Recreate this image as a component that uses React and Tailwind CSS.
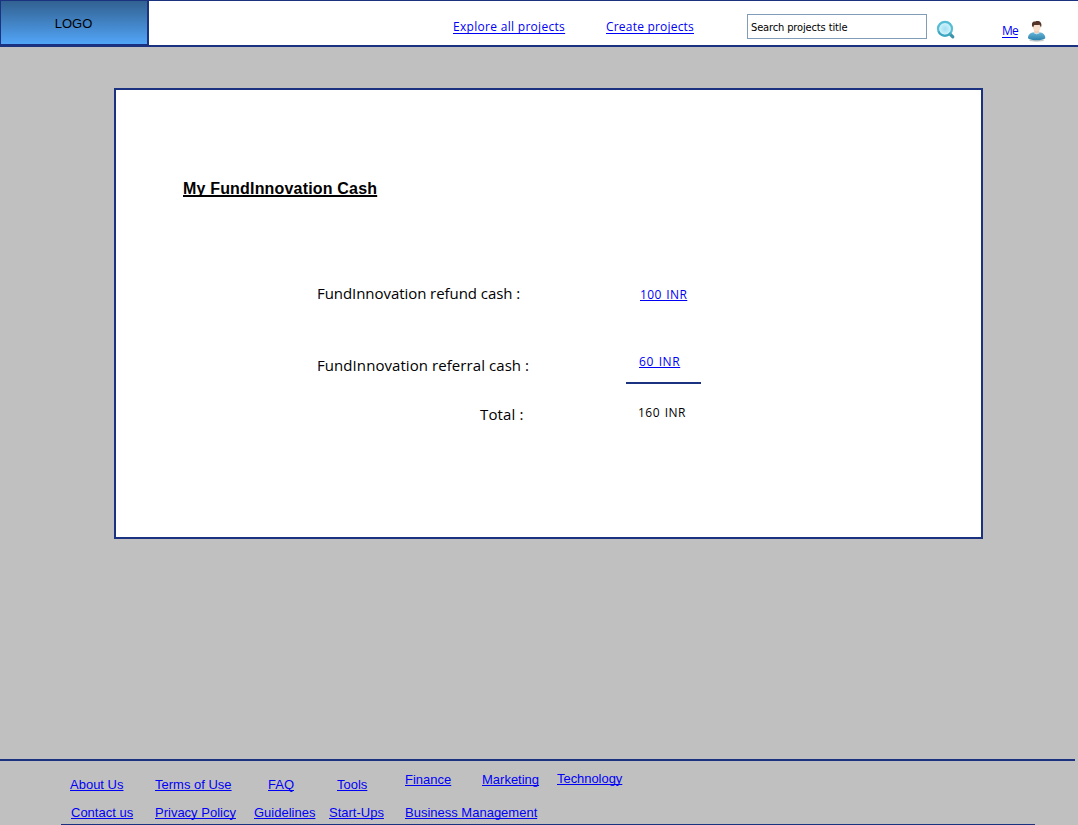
const LINK =
  "block shrink-0 whitespace-nowrap text-[#0000f5] underline decoration-1 [text-decoration-skip-ink:none]";
const HAND = "font-['Comic_Sans_MS','Open_Sans',sans-serif]";

function SearchIcon() {
  return (
    <svg viewBox="0 0 20 20" className="ml-[9px] mt-[19px] size-5 shrink-0">
      <defs>
        <radialGradient id="lens">
          <stop offset="0" stopColor="#9fe0f4" />
          <stop offset="0.5" stopColor="#bdeaf7" />
          <stop offset="1" stopColor="#e0f6fc" />
        </radialGradient>
      </defs>
      <path d="M14.300 14.300l2.500 2.500" stroke="#3f93a8" strokeWidth="3.2" strokeLinecap="round" />
      <circle cx="9" cy="8.800" r="7" fill="url(#lens)" stroke="#55bdd6" strokeWidth="2.200" />
      <path d="M2.500 11.400A7 7 0 0 0 14.600 12.800" fill="none" stroke="#3ea5be" strokeWidth="1.800" />
    </svg>
  );
}

function UserIcon() {
  return (
    <svg viewBox="0 0 20 22" className="mt-[19px] h-[22px] w-5 shrink-0">
      <defs>
        <linearGradient id="shirt" x1="0" y1="0" x2="0" y2="1">
          <stop offset="0" stopColor="#68b5d7" />
          <stop offset="1" stopColor="#2c82ac" />
        </linearGradient>
      </defs>
      <ellipse cx="9.700" cy="20.500" rx="7.500" ry="1.200" fill="#c5cacc" />
      <path d="M1 18.300c0-4 2.500-5.500 6-6h5.200c3.600.5 6.100 2 6.100 6-1.800 1.600-5 2-8.600 2s-7-.4-8.700-2z" fill="url(#shirt)" />
      <path d="M7.200 12.600V9.500h5v3.100l-2.500 1.300z" fill="#f2cdb5" />
      <path d="M6.800 12.800l2.900 1 2.900-1" fill="none" stroke="#d6eaf2" strokeWidth="0.900" />
      <ellipse cx="9.700" cy="7" rx="4" ry="4.300" fill="#f8dfcd" />
      <path d="M5.300 6.600C4.200 3 5.800 1.200 8.300 1.500c3.500-1.400 7 .6 6 5.100l-.7.600c0-1.400-.5-2-1.300-2.500-1.500.6-3.300.2-4.700.2-.9.400-1 1.200-1.200 2.300z" fill="#553328" />
    </svg>
  );
}

export default function App() {
  return (
    <div className="flex h-[825px] w-[1078px] flex-col overflow-hidden bg-[#c0c0c0] text-black">
      <header className="flex h-[47px] shrink-0 items-start border-t border-b-2 border-[#1b3281] bg-white">
        <div className="-mt-px flex h-[46px] w-[149px] shrink-0 justify-center border-2 border-t border-l border-[#1b3281] bg-linear-to-b from-[#316191] to-[#52a5f8] pr-px pt-[15px] font-['Liberation_Sans',sans-serif] text-[13px] leading-4">
          LOGO
        </div>
        <a className={`${LINK} ${HAND} ml-[304px] mt-[18px] w-[112px] text-[12px] leading-4 tracking-[0.3px] underline-offset-2`}>Explore all projects</a>
        <a className={`${LINK} ${HAND} ml-[41px] mt-[18px] w-[88px] text-[12px] leading-4 tracking-[0.2px] underline-offset-2`}>Create projects</a>
        <div className="ml-[53px] mt-[13px] h-[25px] w-[180px] shrink-0 whitespace-nowrap border border-[#7f9db9] bg-white pl-[3px] pt-[5px] font-['DejaVu_Sans_Condensed','DejaVu_Sans',sans-serif] text-[11px] leading-4 tracking-[-0.13px] font-stretch-condensed">
          Search projects title
        </div>
        <SearchIcon />
        <a className={`${LINK} ${HAND} ml-[46px] mr-[9px] mt-[22px] text-[12px] leading-4 tracking-[-0.8px] underline-offset-2`}>Me</a>
        <UserIcon />
      </header>

      <main className="ml-[114px] mt-[41px] flex h-[451px] w-[869px] shrink-0 flex-col border-2 border-[#1b3281] bg-white">
        <h1 className="ml-[67px] mt-[89px] self-start whitespace-nowrap font-['Liberation_Sans',sans-serif] text-[16px] leading-5 font-bold tracking-[0.18px] underline decoration-2 [text-decoration-skip-ink:none]">
          My FundInnovation Cash
        </h1>
        <div className={`${HAND} ml-[201px] mt-[84px] flex h-[72px] shrink-0 items-start whitespace-nowrap`}>
          <span className="w-[323px] text-[15px] leading-5 tracking-[-0.06px]">FundInnovation refund cash :</span>
          <a className={`${LINK} mt-[4px] text-[12px] leading-4 tracking-[0.4px] [word-spacing:1px]`}>100 INR</a>
        </div>
        <div className={`${HAND} ml-[201px] flex h-[49px] shrink-0 items-start whitespace-nowrap`}>
          <span className="w-[309px] text-[15px] leading-5 tracking-[0.07px]">FundInnovation referral cash :</span>
          <div className="-mt-px h-[30px] w-[75px] border-b-2 border-[#1b3281] pl-[13px]">
            <a className={`${LINK} w-[42px] text-[12px] leading-4 tracking-[0.6px] [word-spacing:1px]`}>60 INR</a>
          </div>
        </div>
        <div className={`${HAND} ml-[364px] flex items-start whitespace-nowrap`}>
          <span className="w-[158px] text-[15px] leading-5 tracking-[0.15px]">Total :</span>
          <span className="mt-px text-[12px] leading-4 tracking-[0.5px] [word-spacing:1px]">160 INR</span>
        </div>
      </main>

      <footer className="mt-auto flex h-[66px] w-[1075px] shrink-0 flex-col border-t-2 border-[#1b3281] font-['Liberation_Sans',sans-serif] text-[13px] leading-4">
        <nav className="ml-[70px] mt-[11px] flex h-[33px] shrink-0 items-start">
          <a className={`${LINK} mt-[5px] w-[85px]`}>About Us</a>
          <a className={`${LINK} mt-[5px] w-[113px]`}>Terms of Use</a>
          <a className={`${LINK} mt-[5px] w-[69px]`}>FAQ</a>
          <a className={`${LINK} mt-[5px] w-[68px]`}>Tools</a>
          <a className={`${LINK} w-[77px]`}>Finance</a>
          <a className={`${LINK} w-[75px]`}>Marketing</a>
          <a className={`${LINK} -mt-px tracking-[-0.05px]`}>Technology</a>
        </nav>
        <nav className="ml-[61px] flex h-[20px] w-[974px] shrink-0 items-start border-b border-[#1b3281] pl-[10px]">
          <a className={`${LINK} w-[84px]`}>Contact us</a>
          <a className={`${LINK} w-[99px]`}>Privacy Policy</a>
          <a className={`${LINK} w-[75px]`}>Guidelines</a>
          <a className={`${LINK} w-[76px]`}>Start-Ups</a>
          <a className={LINK}>Business Management</a>
        </nav>
      </footer>
    </div>
  );
}
